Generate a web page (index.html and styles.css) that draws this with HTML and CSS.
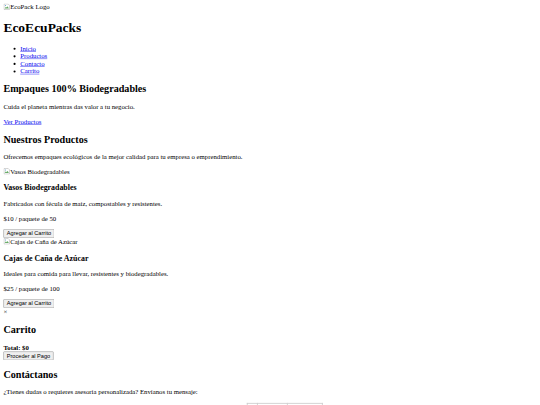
FILE: index.html
```html
<!DOCTYPE html>
<html lang="es">
<head>
<meta charset="utf-8">
<title>EcoEcuPacks</title>
<link rel="stylesheet" href="styles.css">
</head>
<body>
<div class="page">
<header>
  <span class="broken"><svg class="bicon" width="16" height="16" viewBox="0 0 16 16"><path d="M1.5 1.5h10l3 3v10h-13z" fill="#fff" stroke="#999"/><path d="M3 12l3-4 2 2 2-3 3 5z" fill="#6a6"/><circle cx="5" cy="5" r="1.3" fill="#59c"/></svg>EcoPack Logo</span>
  <h1>EcoEcuPacks</h1>
  <nav>
    <ul>
      <li><a href="#">Inicio</a></li>
      <li><a href="#">Productos</a></li>
      <li><a href="#">Contacto</a></li>
      <li><a href="#">Carrito</a></li>
    </ul>
  </nav>
</header>
<section>
  <h2>Empaques 100% Biodegradables</h2>
  <p>Cuida el planeta mientras das valor a tu negocio.</p>
  <a href="#">Ver Productos</a>
</section>
<section>
  <h2>Nuestros Productos</h2>
  <p>Ofrecemos empaques ecológicos de la mejor calidad para tu empresa o emprendimiento.</p>
  <div class="product">
    <span class="broken"><svg class="bicon" width="16" height="16" viewBox="0 0 16 16"><path d="M1.5 1.5h10l3 3v10h-13z" fill="#fff" stroke="#999"/><path d="M3 12l3-4 2 2 2-3 3 5z" fill="#6a6"/><circle cx="5" cy="5" r="1.3" fill="#59c"/></svg>Vasos Biodegradables</span>
    <h3>Vasos Biodegradables</h3>
    <p>Fabricados con fécula de maíz, compostables y resistentes.</p>
    <p>$10 / paquete de 50</p>
    <button>Agregar al Carrito</button>
  </div>
  <div class="product">
    <span class="broken"><svg class="bicon" width="16" height="16" viewBox="0 0 16 16"><path d="M1.5 1.5h10l3 3v10h-13z" fill="#fff" stroke="#999"/><path d="M3 12l3-4 2 2 2-3 3 5z" fill="#6a6"/><circle cx="5" cy="5" r="1.3" fill="#59c"/></svg>Cajas de Caña de Azúcar</span>
    <h3>Cajas de Caña de Azúcar</h3>
    <p>Ideales para comida para llevar, resistentes y biodegradables.</p>
    <p>$25 / paquete de 100</p>
    <button>Agregar al Carrito</button>
  </div>
</section>
<div class="modal">
  <span class="close">&times;</span>
  <h2>Carrito</h2>
  <ul class="cart"></ul>
  <div><strong>Total: $0</strong></div>
  <button>Proceder al Pago</button>
</div>
<section>
  <h2>Contáctanos</h2>
  <p>¿Tienes dudas o requieres asesoría personalizada? Envíanos tu mensaje:</p>
  <form class="form">
    <span class="fbox b1"></span><span class="fbox b2"></span><span class="fbox b3"></span>
  </form>
</section>
</div>
</body>
</html>
```
FILE: styles.css
```css
html {
  overflow: hidden;
}
body {
  margin: 0;
  font-family: "Liberation Serif", "Times New Roman", serif;
  font-size: 16px;
  color: #000;
  background: #fff;
}
.page {
  width: 1264px;
  padding: 8px;
  transform: scale(0.421875);
  transform-origin: 0 0;
}
a {
  color: #0000ee;
}
.broken {
  display: inline-block;
}
.bicon {
  vertical-align: -2px;
}
button {
  font-family: "Liberation Sans", Arial, sans-serif;
  font-size: 13.333px;
}
.form {
  padding-left: 577px;
  display: flex;
}
.fbox {
  display: block;
  height: 40px;
  border: 2px solid #ccc;
  border-bottom: none;
}
.b1 { width: 22px; }
.b2 { width: 69px; border-left: none; }
.b3 { width: 81px; border-left: none; }
```
